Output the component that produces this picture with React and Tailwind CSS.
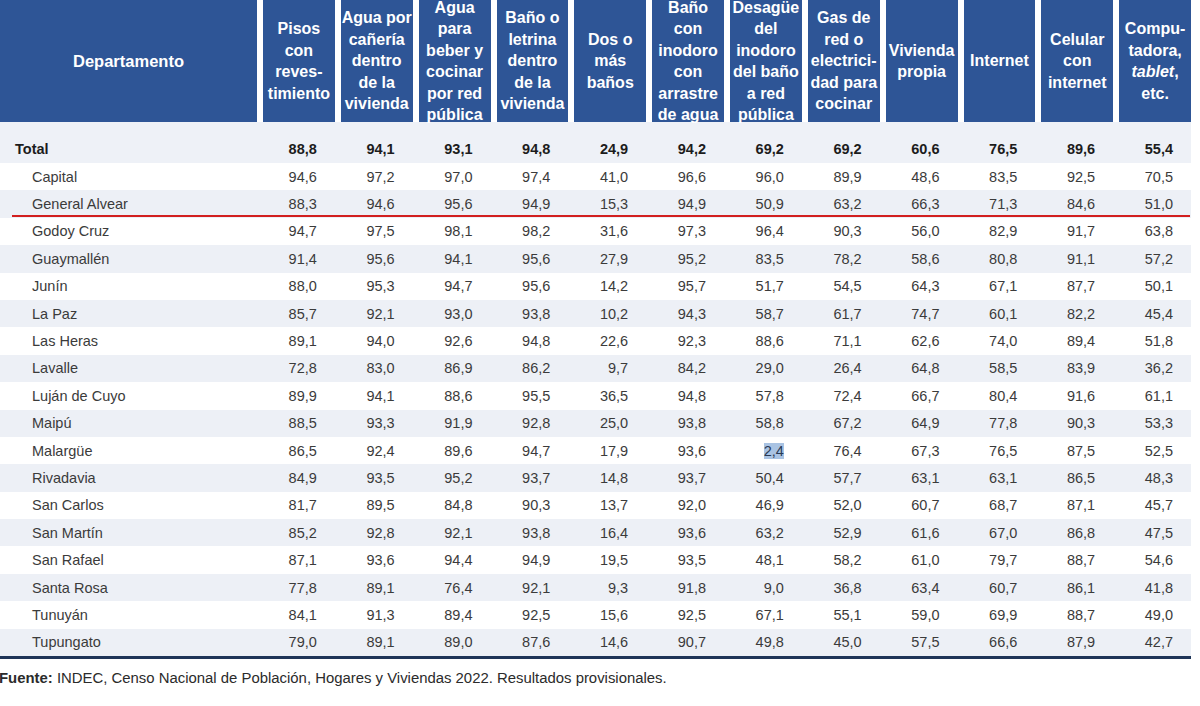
import React from 'react';

const headers = [
  ['Pisos', 'con', 'reves-', 'timiento'],
  ['Agua por', 'cañería', 'dentro', 'de la', 'vivienda'],
  ['Agua', 'para', 'beber y', 'cocinar', 'por red', 'pública'],
  ['Baño o', 'letrina', 'dentro', 'de la', 'vivienda'],
  ['Dos o', 'más', 'baños'],
  ['Baño', 'con', 'inodoro', 'con', 'arrastre', 'de agua'],
  ['Desagüe', 'del', 'inodoro', 'del baño', 'a red', 'pública'],
  ['Gas de', 'red o', 'electrici-', 'dad para', 'cocinar'],
  ['Vivienda', 'propia'],
  ['Internet'],
  ['Celular', 'con', 'internet'],
  ['Compu-', 'tadora,', 'TABLET', 'etc.'],
];

const total = ['88,8', '94,1', '93,1', '94,8', '24,9', '94,2', '69,2', '69,2', '60,6', '76,5', '89,6', '55,4'];

const rows = [
  ['Capital', '94,6 97,2 97,0 97,4 41,0 96,6 96,0 89,9 48,6 83,5 92,5 70,5'],
  ['General Alvear', '88,3 94,6 95,6 94,9 15,3 94,9 50,9 63,2 66,3 71,3 84,6 51,0'],
  ['Godoy Cruz', '94,7 97,5 98,1 98,2 31,6 97,3 96,4 90,3 56,0 82,9 91,7 63,8'],
  ['Guaymallén', '91,4 95,6 94,1 95,6 27,9 95,2 83,5 78,2 58,6 80,8 91,1 57,2'],
  ['Junín', '88,0 95,3 94,7 95,6 14,2 95,7 51,7 54,5 64,3 67,1 87,7 50,1'],
  ['La Paz', '85,7 92,1 93,0 93,8 10,2 94,3 58,7 61,7 74,7 60,1 82,2 45,4'],
  ['Las Heras', '89,1 94,0 92,6 94,8 22,6 92,3 88,6 71,1 62,6 74,0 89,4 51,8'],
  ['Lavalle', '72,8 83,0 86,9 86,2 9,7 84,2 29,0 26,4 64,8 58,5 83,9 36,2'],
  ['Luján de Cuyo', '89,9 94,1 88,6 95,5 36,5 94,8 57,8 72,4 66,7 80,4 91,6 61,1'],
  ['Maipú', '88,5 93,3 91,9 92,8 25,0 93,8 58,8 67,2 64,9 77,8 90,3 53,3'],
  ['Malargüe', '86,5 92,4 89,6 94,7 17,9 93,6 2,4 76,4 67,3 76,5 87,5 52,5'],
  ['Rivadavia', '84,9 93,5 95,2 93,7 14,8 93,7 50,4 57,7 63,1 63,1 86,5 48,3'],
  ['San Carlos', '81,7 89,5 84,8 90,3 13,7 92,0 46,9 52,0 60,7 68,7 87,1 45,7'],
  ['San Martín', '85,2 92,8 92,1 93,8 16,4 93,6 63,2 52,9 61,6 67,0 86,8 47,5'],
  ['San Rafael', '87,1 93,6 94,4 94,9 19,5 93,5 48,1 58,2 61,0 79,7 88,7 54,6'],
  ['Santa Rosa', '77,8 89,1 76,4 92,1 9,3 91,8 9,0 36,8 63,4 60,7 86,1 41,8'],
  ['Tunuyán', '84,1 91,3 89,4 92,5 15,6 92,5 67,1 55,1 59,0 69,9 88,7 49,0'],
  ['Tupungato', '79,0 89,1 89,0 87,6 14,6 90,7 49,8 45,0 57,5 66,6 87,9 42,7'],
];

const grid = 'grid grid-cols-[257px_repeat(12,minmax(0,1fr))] gap-x-[6px]';

const HeaderCell = ({ lines }) => (
  <div className="h-[122px] bg-[#2e5596] flex flex-col items-center justify-center overflow-visible text-white font-bold text-[16px] leading-[21.5px] text-center whitespace-nowrap">
    {lines.map((l, i) =>
      l === 'TABLET' ? (
        <span key={i}>
          <i>tablet</i>,
        </span>
      ) : (
        <span key={i}>{l}</span>
      )
    )}
  </div>
);

export default function App() {
  return (
    <div className="w-[1200px] h-[706px] bg-white overflow-hidden font-['Liberation_Sans',Arial,sans-serif]">
      <div className="w-[1191px]">
        <div className={`${grid} bg-white`}>
          <div className="h-[122px] bg-[#2e5596] flex items-center justify-center text-white font-bold text-[16.5px]">
            Departamento
          </div>
          {headers.map((h, i) => (
            <HeaderCell key={i} lines={h} />
          ))}
        </div>

        <div className={`${grid} h-[41px] bg-[#eef1f7] items-end pb-[4px] text-[14.5px] leading-[20px] font-bold text-[#1c1c1c]`}>
          <div className="pl-[15px]">Total</div>
          {total.map((v, i) => (
            <div key={i} className="text-right pr-[18px]">
              {v}
            </div>
          ))}
        </div>

        {rows.map(([name, vals], r) => (
          <div
            key={name}
            className={`${grid} relative h-[27.4px] items-center text-[14.5px] leading-[20px] text-[#3b3b3b] ${
              r % 2 === 1 ? 'bg-[#edf0f6]' : 'bg-white'
            }`}
          >
            <div className="pl-[32px]">{name}</div>
            {vals.split(' ').map((v, i) => (
              <div key={i} className="text-right pr-[18px]">
                {name === 'Malargüe' && i === 6 ? (
                  <span className="bg-[#a9c3e3] text-[#2a3a55]">{v}</span>
                ) : (
                  v
                )}
              </div>
            ))}
            {name === 'General Alvear' && (
              <div className="absolute left-[12px] right-[1px] bottom-[1px] h-[2px] bg-[#d21f1f]" />
            )}
          </div>
        ))}

        <div className="h-[3px] bg-[#1f3558]" />
      </div>

      <div className="mt-[9px] -ml-[1px] text-[14.9px] leading-[20px] text-[#2b2b2b]">
        <b>Fuente:</b> INDEC, Censo Nacional de Población, Hogares y Viviendas 2022. Resultados provisionales.
      </div>
    </div>
  );
}
